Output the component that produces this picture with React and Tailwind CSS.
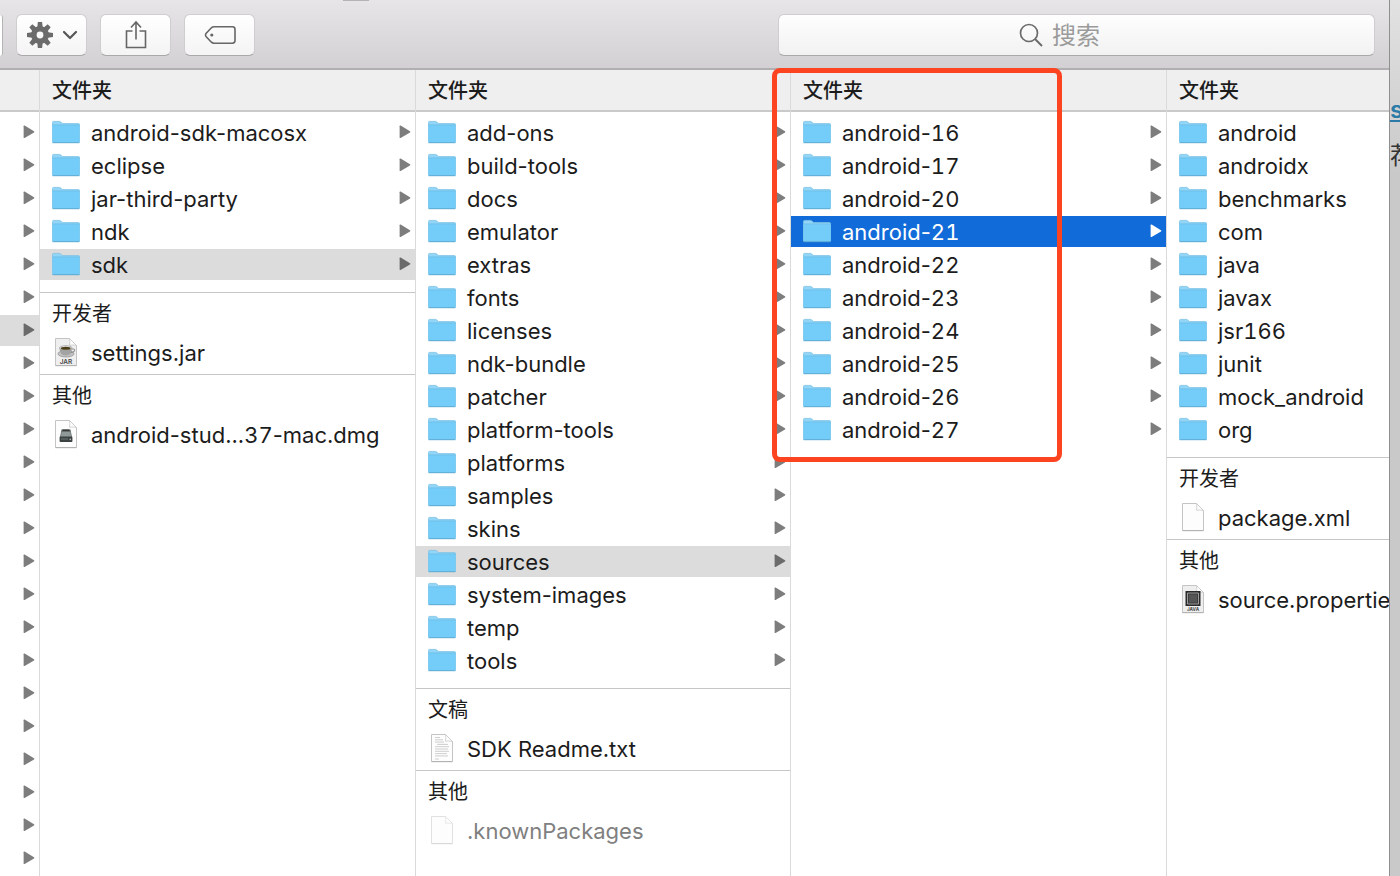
import { clsx } from 'clsx';

const PATH_ROWS = Array.from({ length: 23 }, (_, i) => i);
const PATH_SELECTED = 6;

const COLUMNS = [
    {
        id: 'root',
        folders: ['android-sdk-macosx', 'eclipse', 'jar-third-party', 'ndk', 'sdk'],
        open: 'sdk',
        groups: [
            { title: '开发者', file: 'settings.jar', kind: 'jar' },
            { title: '其他', file: 'android-stud...37-mac.dmg', kind: 'dmg' },
        ],
    },
    {
        id: 'sdk',
        folders: [
            'add-ons', 'build-tools', 'docs', 'emulator', 'extras', 'fonts', 'licenses', 'ndk-bundle', 'patcher',
            'platform-tools', 'platforms', 'samples', 'skins', 'sources', 'system-images', 'temp', 'tools',
        ],
        open: 'sources',
        groups: [
            { title: '文稿', file: 'SDK Readme.txt', kind: 'text' },
            { title: '其他', file: '.knownPackages', kind: 'blank', hidden: true },
        ],
    },
    {
        id: 'sources',
        folders: [
            'android-16', 'android-17', 'android-20', 'android-21', 'android-22',
            'android-23', 'android-24', 'android-25', 'android-26', 'android-27',
        ],
        active: 'android-21',
        marked: true,
        groups: [],
    },
    {
        id: 'android-21',
        folders: ['android', 'androidx', 'benchmarks', 'com', 'java', 'javax', 'jsr166', 'junit', 'mock_android', 'org'],
        last: true,
        groups: [
            { title: '开发者', file: 'package.xml', kind: 'blank' },
            { title: '其他', file: 'source.properties', kind: 'java' },
        ],
    },
];

function Arrow({ className }) {
    return (
        <svg width="12" height="17" viewBox="0 0 12 17" className={clsx('shrink-0', className)} aria-hidden="true">
            <path d="M1.6 1.6 L11 7.2 Q11.8 7.8 11 8.4 L1.6 14 Q0.6 14.4 0.6 13.4 V2.2 Q0.6 1.2 1.6 1.6Z" fill="currentColor" />
        </svg>
    );
}

function FolderIcon() {
    return (
        <svg width="28" height="25" viewBox="0 0 28 25" className="shrink-0" aria-hidden="true">
            <path d="M0.5 22 V2.4 Q0.5 1.4 1.5 1.4 H7.5 Q8.4 1.4 9 2.2 L10.5 3.6 H26.5 Q27.5 3.6 27.5 4.6 V22Z" fill="#92d5f6" stroke="#7cc2e6" strokeWidth="0.8" />
            <path d="M0.5 5.2 H27.5 V21.8 Q27.5 22.8 26.5 22.8 H1.5 Q0.5 22.8 0.5 21.8Z" fill="#74cdf8" />
            <path d="M0.5 5 H27.5" stroke="#62bbe7" strokeWidth="0.8" />
            <path d="M0.5 22.7 H27.5" stroke="#5aa9d0" strokeWidth="1" />
        </svg>
    );
}

function FileIcon({ kind, faded }) {
    return (
        <svg width="28" height="31" viewBox="0 0 28 31" className={clsx('shrink-0', faded && 'opacity-50')} aria-hidden="true">
            <path
                d="M3.5 1.5 H17.5 L24.5 8.5 V28.5 H3.5Z"
                fill={kind === 'jar' || kind === 'java' ? '#efefef' : '#fdfdfd'}
                stroke="#c4c4c4"
            />
            <path d="M17.5 1.5 Q18.2 4.5 17.5 8.2 Q21 7.6 24.5 8.5Z" fill="#fff" stroke="#c8c8c8" strokeWidth="0.8" />
            <path d="M3.5 28.7 H24.5" stroke="#a9a9a9" strokeWidth="0.8" />
            {kind === 'jar' && (
                <>
                    <ellipse cx="14" cy="16.8" rx="8" ry="3.2" fill="#c3c3c3" stroke="#8c8c8c" strokeWidth="0.7" />
                    <path d="M7.5 11 H20 Q20 18.5 14 18.5 Q7.5 18.5 7.5 11Z" fill="#a3a3a3" />
                    <path d="M20 12 Q23.4 11.6 22.4 14 Q21.4 15.6 18.8 15.4" fill="none" stroke="#8e8e8e" strokeWidth="1.1" />
                    <ellipse cx="13.8" cy="11" rx="6.3" ry="2.3" fill="#eaeaea" stroke="#858585" strokeWidth="0.6" />
                    <ellipse cx="13.8" cy="11.2" rx="4.9" ry="1.5" fill="#4a3d16" />
                    <text x="14" y="27" textAnchor="middle" fontSize="6.5" fontWeight="600" fontFamily="Inter, sans-serif" fill="#4a4a4a">JAR</text>
                </>
            )}
            {kind === 'dmg' && (
                <>
                    <path d="M9.5 10.5 H18.5 L20 18 H8Z" fill="#68706f" />
                    <path d="M10.5 11.2 H17.5" stroke="#2f3533" strokeWidth="1.4" />
                    <path d="M9.6 13 H18.4 L19.2 18 H8.8Z" fill="#8f9997" />
                    <rect x="7.6" y="17.6" width="12.8" height="5.4" rx="0.8" fill="#3b4241" />
                    <path d="M9 20 H16" stroke="#6f7776" strokeWidth="1" />
                    <circle cx="18.3" cy="20.4" r="0.8" fill="#b5bcbb" />
                </>
            )}
            {kind === 'text' && (
                <path
                    d="M7 4.5 H12 M7 6.8 H15 M7 9.1 H16 M9 11.4 H20 M7 13.7 H21 M7 16 H20 M7 18.3 H21 M7 20.6 H19 M7 22.9 H20 M7 26 H11"
                    stroke="#c2c2c2"
                    strokeWidth="0.8"
                />
            )}
            {kind === 'java' && (
                <>
                    <path d="M6.5 7 H21.5 V22 H6.5Z" fill="#2a2a2a" />
                    <path d="M8.5 9 H19.5 V20 H8.5Z" fill="#3c3c3c" stroke="#b8b8b8" strokeWidth="0.8" />
                    <path d="M10 10.5 H18 V18.5 H10Z" fill="#555" />
                    <text x="14" y="27" textAnchor="middle" fontSize="4.6" fontWeight="700" fontFamily="Inter, sans-serif" fill="#444">JAVA</text>
                </>
            )}
        </svg>
    );
}

function GearIcon() {
    return (
        <svg width="28" height="28" viewBox="-14 -14 28 28" aria-hidden="true">
            <g fill="#6b6b6b">
                {[0, 45, 90, 135].map(deg => (
                    <path key={deg} d="M-2.7 -8 L-2.1 -13 H2.1 L2.7 -8 V8 L2.1 13 H-2.1 L-2.7 8Z" transform={`rotate(${deg})`} />
                ))}
                <circle r="8.9" />
            </g>
            <circle r="3.4" fill="#f8f8f8" />
        </svg>
    );
}

function ToolButton({ label, children }) {
    return (
        <button
            type="button"
            aria-label={label}
            className="flex h-[42px] w-[71px] shrink-0 items-center justify-center rounded-md border border-[#cfcdcf] border-b-[#aaa8aa] bg-linear-to-b from-white to-[#f4f4f4]"
        >
            {children}
        </button>
    );
}

function Toolbar() {
    return (
        <header className="relative flex h-[70px] shrink-0 items-center gap-[13px] border-b-2 border-[#b1afb1] bg-linear-to-b from-[#e7e5e7] to-[#d2d0d2] pr-[14px] pt-[2px]">
            <div className="absolute left-[343px] top-0 h-px w-[26px] bg-[#b5b3b5]" />
            <div className="h-[41px] w-[3px] shrink-0 rounded-r-sm border-r border-[#b5b3b5] bg-white" />
            <ToolButton label="操作">
                <GearIcon />
                <svg width="16" height="12" viewBox="0 0 16 12" className="ml-2" aria-hidden="true">
                    <path d="M2 3 L8 9 L14 3" fill="none" stroke="#555" strokeWidth="2.2" strokeLinecap="round" strokeLinejoin="round" />
                </svg>
            </ToolButton>
            <ToolButton label="共享">
                <svg width="24" height="30" viewBox="0 0 24 30" fill="none" stroke="#666" strokeWidth="1.6" aria-hidden="true">
                    <path d="M8.5 11 H2.5 V27.5 H21.5 V11 H15.5" />
                    <path d="M12 19.5 V2.5 M7 7.5 L12 2 L17 7.5" />
                </svg>
            </ToolButton>
            <ToolButton label="标签">
                <svg width="34" height="20" viewBox="0 0 34 20" fill="none" stroke="#666" strokeWidth="1.6" aria-hidden="true">
                    <path d="M11 1.8 H29.5 Q32 1.8 32 4.4 V15.6 Q32 18.2 29.5 18.2 H11 Q9.5 18.2 8.4 17.2 L3 11.6 Q1.8 10 3 8.4 L8.4 2.8 Q9.5 1.8 11 1.8Z" />
                    <circle cx="8.8" cy="10" r="1.6" fill="#666" stroke="none" />
                </svg>
            </ToolButton>
            <label className="ml-[510px] flex h-[42px] flex-1 items-center justify-center gap-[9px] rounded-md border border-[#cfcdcf] border-b-[#aaa8aa] bg-linear-to-b from-[#fefefe] to-[#f2f2f2]">
                <svg width="24" height="24" viewBox="0 0 24 24" fill="none" stroke="#6b6b6b" strokeWidth="1.7" aria-hidden="true">
                    <circle cx="10" cy="10" r="8.5" />
                    <path d="M16 16 L23 23" strokeWidth="2" />
                </svg>
                <input
                    type="search"
                    aria-label="搜索"
                    placeholder="搜索"
                    className="w-[82px] bg-transparent pt-[2px] text-[24px] leading-[36px] outline-none placeholder:text-[#9b9b9b]"
                />
            </label>
        </header>
    );
}

// Digits line up between rows, while hyphens keep their own width
function FileName({ name }) {
    return name.split(/(\d+)/).map((part, i) => (
        i % 2 ? <span key={i} className="tabular-nums">{part}</span> : part
    ));
}

function ItemRow({ name, icon, arrow, open, active, hidden }) {
    return (
        <button
            type="button"
            className={clsx(
                'flex h-[31px] w-full items-center gap-[11px] overflow-hidden pl-3 pr-1 text-left text-[22px] leading-[31px]',
                open && 'bg-[#dcdcdc]',
                active && 'bg-[#116bd8]',
                active ? 'text-white' : hidden ? 'text-[#808080]' : 'text-[#1c1c1c]',
            )}
        >
            {icon}
            <span className="flex-1 whitespace-nowrap pt-[2px]"><FileName name={name} /></span>
            {arrow && <Arrow className={active ? 'text-white' : open ? 'text-[#6b6b6b]' : 'text-[#7d7d7d]'} />}
        </button>
    );
}

function Column({ column }) {
    return (
        <section className={clsx('relative min-w-0', !column.last && 'border-r border-[#dadada]')}>
            <h2 className="h-[42px] border-b-2 border-[#c9c9c9] bg-[#efefef] pl-3 text-[20px] font-medium leading-[42px] text-[#1c1c1c]">
                文件夹
            </h2>
            <ul className="flex flex-col gap-[2px] pb-3 pt-[5px]">
                {column.folders.map(name => (
                    <li key={name}>
                        <ItemRow
                            name={name}
                            icon={<FolderIcon />}
                            arrow={!column.last}
                            open={name === column.open}
                            active={name === column.active}
                        />
                    </li>
                ))}
            </ul>
            {column.groups.map(group => (
                <div key={group.title} className="border-t border-[#c6c6c6] pb-[6px]">
                    <h3 className="mb-[2px] pl-3 text-[20px] leading-[42px] text-[#1c1c1c]">{group.title}</h3>
                    <ItemRow
                        name={group.file}
                        icon={<FileIcon kind={group.kind} faded={group.hidden} />}
                        hidden={group.hidden}
                    />
                </div>
            ))}
            {column.marked && (
                <div className="pointer-events-none absolute -left-[19px] -top-[2px] z-10 h-[394px] w-[290px] rounded-lg border-[5px] border-[#fc4420]" />
            )}
        </section>
    );
}

// Tail of the parent column, scrolled almost out of view
function PathColumn() {
    return (
        <section className="border-r border-[#dadada]">
            <div className="h-[42px] border-b-2 border-[#c9c9c9] bg-[#efefef]" />
            <ul className="flex flex-col gap-[2px] pt-[5px]">
                {PATH_ROWS.map(i => (
                    <li
                        key={i}
                        className={clsx(
                            'flex h-[31px] items-center justify-end pr-1',
                            i === PATH_SELECTED ? 'bg-[#dcdcdc] text-[#6b6b6b]' : 'text-[#7d7d7d]',
                        )}
                    >
                        <Arrow />
                    </li>
                ))}
            </ul>
        </section>
    );
}

export default function App() {
    return (
        <div className="flex h-screen overflow-hidden bg-[#c9c9c9] font-[Inter,'Noto_Sans_CJK_SC',sans-serif]">
            <main className="flex min-w-0 flex-1 flex-col bg-white">
                <Toolbar />
                <div className="grid min-h-0 flex-1 grid-cols-[40px_376fr_375fr_376fr_222fr]">
                    <PathColumn />
                    {COLUMNS.map(column => (
                        <Column key={column.id} column={column} />
                    ))}
                </div>
            </main>
            <aside className="w-[11px] shrink-0 overflow-hidden border-l border-[#8f8f8f] bg-linear-to-b from-[#e2e2e2] to-[#c9c9c9] to-20% pt-[95px]">
                <a href="#s" className="block text-[24px] font-semibold leading-[30px] text-[#2a7ba8] underline">s</a>
                <p className="mt-[14px] w-6 text-[24px] leading-[34px] text-[#333]">荐</p>
            </aside>
        </div>
    );
}
